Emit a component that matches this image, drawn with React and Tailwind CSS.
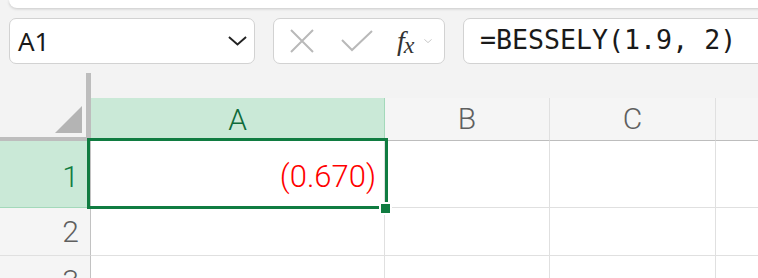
import React from "react";

function XIcon() {
  return (
    <svg width="26" height="26" viewBox="0 0 26 26" className="shrink-0">
      <path d="M2 2 L24 24 M24 2 L2 24" stroke="#b9b9b9" strokeWidth="2" fill="none" />
    </svg>
  );
}

function CheckIcon() {
  return (
    <svg width="32" height="22" viewBox="0 0 32 22" className="shrink-0">
      <path d="M1 10 L11 20 L31 1" stroke="#b9b9b9" strokeWidth="2" fill="none" />
    </svg>
  );
}

function Chevron({ size = 20, color = "#222", sw = 2 }) {
  return (
    <svg width={size} height={size / 2} viewBox="0 0 20 10" className="shrink-0">
      <path d="M1 1 L10 9 L19 1" stroke={color} strokeWidth={sw} fill="none" />
    </svg>
  );
}

export default function App() {
  return (
    <div className="w-[758px] h-[278px] bg-[#f3f3f3] overflow-hidden flex flex-col font-['Liberation_Sans',sans-serif]">
      {/* top panel edge */}
      <div className="h-[8px] ml-[9px] -mr-[20px] bg-white rounded-b-[10px] shadow-[0_1px_3px_rgba(0,0,0,0.18)] shrink-0" />

      {/* toolbar */}
      <div className="mt-[10px] h-[46px] flex shrink-0">
        <div className="ml-[9px] w-[246px] shrink-0 h-full bg-white border-[1.5px] border-[#d2d2d2] rounded-[7px] flex items-center pl-[8px] pr-[7px]">
          <span className="text-[26px] text-[#1a1a1a] leading-none font-['Noto_Sans',sans-serif]">A1</span>
          <div className="flex-1" />
          <Chevron size={19} color="#222" sw={2} />
        </div>
        <div className="ml-[18px] w-[172px] shrink-0 h-full bg-white border-[1.5px] border-[#d2d2d2] rounded-[7px] flex items-center pl-[15px]">
          <XIcon />
          <div className="w-[26px] shrink-0" />
          <CheckIcon />
          <div className="w-[24px] shrink-0" />
          <span className="text-[#333] text-[28px] leading-none italic font-['Liberation_Serif',serif] tracking-[-1px]">
            f<span className="text-[24px] relative top-[3px]">x</span>
          </span>
          <div className="w-[11px] shrink-0" />
          <Chevron size={8} color="#bbb" sw={2} />
        </div>
        <div className="ml-[18px] w-[320px] shrink-0 h-full bg-white border-[1.5px] border-[#d2d2d2] rounded-[7px] flex items-center pl-[16px] pb-[2px]">
          <span className="text-[26.6px] leading-none text-[#1a1a1a] font-['DejaVu_Sans_Mono',monospace] whitespace-pre">=BESSELY(1.9, 2)</span>
        </div>
      </div>

      {/* sheet */}
      <div className="mt-[9px] relative flex flex-col font-['Roboto',sans-serif] font-light">
        <div className="h-[25px] flex shrink-0">
          <div className="w-[86px]" />
          <div className="w-[5px] bg-[#bdbdbd]" />
        </div>
        {/* column header row */}
        <div className="h-[43px] flex shrink-0">
          <div className="w-[91px] shrink-0 relative border-r-[5px] border-b-[4px] border-[#bdbdbd] bg-[#f3f3f3]">
            <svg width="27" height="27" viewBox="0 0 27 27" className="absolute right-[4px] bottom-[4px]">
              <path d="M27 0 L27 27 L0 27 Z" fill="#b4b4b4" />
            </svg>
          </div>
          <div className="w-[294px] shrink-0 bg-[#cae9d7] border-r border-[#a3d9ba] flex items-center justify-center text-[30px] text-[#0f6b3a] leading-none">
            A
          </div>
          <div className="w-[165px] shrink-0 bg-[#f5f5f5] border-r border-[#e0e0e0] border-b border-b-[#bdbdbd] flex items-center justify-center text-[30px] text-[#5f5f5f] leading-none">
            B
          </div>
          <div className="w-[166px] shrink-0 bg-[#f5f5f5] border-r border-[#e0e0e0] border-b border-b-[#bdbdbd] flex items-center justify-center text-[30px] text-[#5f5f5f] leading-none">
            C
          </div>
          <div className="flex-1 bg-[#f5f5f5] border-b border-b-[#bdbdbd]" />
        </div>
        {/* row 1 */}
        <div className="h-[67px] flex shrink-0">
          <div className="w-[91px] shrink-0 bg-[#cae9d7] border-r border-[#c2c2c2] border-b border-b-[#a3d9ba] flex items-end justify-end pr-[11px] pb-[15px] text-[30px] leading-none text-[#107c41]">
            1
          </div>
          <div className="w-[294px] shrink-0 bg-white border-r border-b border-[#e0e0e0] flex items-end justify-end pr-[8px] pb-[15px] text-[31px] leading-none text-[#ff0000]">
            (0.670)
          </div>
          <div className="w-[165px] shrink-0 bg-white border-r border-b border-[#e0e0e0]" />
          <div className="w-[166px] shrink-0 bg-white border-r border-b border-[#e0e0e0]" />
          <div className="flex-1 bg-white border-b border-[#e0e0e0]" />
        </div>
        {/* row 2 */}
        <div className="h-[48px] flex shrink-0">
          <div className="w-[91px] shrink-0 bg-[#f5f5f5] border-r border-[#c2c2c2] border-b border-b-[#e0e0e0] flex items-end justify-end pr-[11px] pb-[8px] text-[30px] leading-none text-[#5f5f5f]">
            2
          </div>
          <div className="w-[294px] shrink-0 bg-white border-r border-b border-[#e0e0e0]" />
          <div className="w-[165px] shrink-0 bg-white border-r border-b border-[#e0e0e0]" />
          <div className="w-[166px] shrink-0 bg-white border-r border-b border-[#e0e0e0]" />
          <div className="flex-1 bg-white border-b border-[#e0e0e0]" />
        </div>
        {/* row 3 */}
        <div className="h-[48px] flex shrink-0">
          <div className="w-[91px] shrink-0 bg-[#f5f5f5] border-r border-[#c2c2c2] flex items-end justify-end pr-[11px] pb-[8px] text-[30px] leading-none text-[#5f5f5f]">
            3
          </div>
          <div className="w-[294px] shrink-0 bg-white border-r border-[#e0e0e0]" />
          <div className="w-[165px] shrink-0 bg-white border-r border-[#e0e0e0]" />
          <div className="w-[166px] shrink-0 bg-white border-r border-[#e0e0e0]" />
          <div className="flex-1 bg-white" />
        </div>

        {/* selection */}
        <div className="absolute left-[87px] top-[65px] w-[301px] h-[71px] border-[3px] border-[#107c41] pointer-events-none" />
        <div className="absolute left-[379px] top-[129px] w-[13px] h-[13px] bg-[#107c41] border-2 border-white pointer-events-none" />
      </div>
    </div>
  );
}
